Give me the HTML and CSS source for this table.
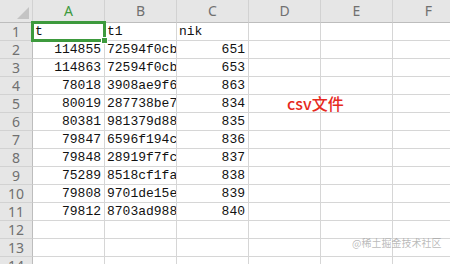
FILE: index.html
```html
<!DOCTYPE html>
<html lang="zh-CN">
    <head>
        <meta charset="UTF-8" />
        <meta name="viewport" content="width=device-width, initial-scale=1.0" />
        <title>csv文件</title>
        <link rel="stylesheet" href="styles.css">
    </head>
    <body>
        <div class="sheet">
            <!-- 列标题 -->
            <div class="corner"></div>
            <div class="col-head active">A</div>
            <div class="col-head">B</div>
            <div class="col-head">C</div>
            <div class="col-head">D</div>
            <div class="col-head">E</div>
            <div class="col-head">F</div>

            <div class="row-head">1</div>
            <div class="cell">t</div>
            <div class="cell">t1</div>
            <div class="cell">nik</div>
            <div class="cell"></div><div class="cell"></div><div class="cell"></div>

            <div class="row-head">2</div>
            <div class="cell num">114855</div>
            <div class="cell">72594f0cbd21a6</div>
            <div class="cell num">651</div>
            <div class="cell"></div><div class="cell"></div><div class="cell"></div>

            <div class="row-head">3</div>
            <div class="cell num">114863</div>
            <div class="cell">72594f0cbd21a6</div>
            <div class="cell num">653</div>
            <div class="cell"></div><div class="cell"></div><div class="cell"></div>

            <div class="row-head">4</div>
            <div class="cell num">78018</div>
            <div class="cell">3908ae9f6c01b</div>
            <div class="cell num">863</div>
            <div class="cell"></div><div class="cell"></div><div class="cell"></div>

            <div class="row-head">5</div>
            <div class="cell num">80019</div>
            <div class="cell">287738be7a5d2</div>
            <div class="cell num">834</div>
            <div class="cell"></div><div class="cell"></div><div class="cell"></div>

            <div class="row-head">6</div>
            <div class="cell num">80381</div>
            <div class="cell">981379d88e42f</div>
            <div class="cell num">835</div>
            <div class="cell"></div><div class="cell"></div><div class="cell"></div>

            <div class="row-head">7</div>
            <div class="cell num">79847</div>
            <div class="cell">6596f194c3b07</div>
            <div class="cell num">836</div>
            <div class="cell"></div><div class="cell"></div><div class="cell"></div>

            <div class="row-head">8</div>
            <div class="cell num">79848</div>
            <div class="cell">28919f7fc64a1</div>
            <div class="cell num">837</div>
            <div class="cell"></div><div class="cell"></div><div class="cell"></div>

            <div class="row-head">9</div>
            <div class="cell num">75289</div>
            <div class="cell">8518cf1fa20e9</div>
            <div class="cell num">838</div>
            <div class="cell"></div><div class="cell"></div><div class="cell"></div>

            <div class="row-head">10</div>
            <div class="cell num">79808</div>
            <div class="cell">9701de15e8c34</div>
            <div class="cell num">839</div>
            <div class="cell"></div><div class="cell"></div><div class="cell"></div>

            <div class="row-head">11</div>
            <div class="cell num">79812</div>
            <div class="cell">8703ad988f1b5</div>
            <div class="cell num">840</div>
            <div class="cell"></div><div class="cell"></div><div class="cell"></div>

            <div class="row-head">12</div>
            <div class="cell"></div><div class="cell"></div><div class="cell"></div>
            <div class="cell"></div><div class="cell"></div><div class="cell"></div>

            <div class="row-head">13</div>
            <div class="cell"></div><div class="cell"></div><div class="cell"></div>
            <div class="cell"></div><div class="cell"></div><div class="cell"></div>

            <div class="row-head">14</div>
            <div class="cell"></div><div class="cell"></div><div class="cell"></div>
            <div class="cell"></div><div class="cell"></div><div class="cell"></div>

            <!-- 选中单元格 A1 -->
            <div class="selection"><span class="handle"></span></div>
            <!-- 标注文字 -->
            <div class="note">csv文件</div>
        </div>
        <div class="watermark">@稀土掘金技术社区</div>
    </body>
</html>
```

FILE: styles.css
```css
* {
    margin: 0;
    padding: 0;
    box-sizing: border-box;
}
body {
    width: 450px;
    height: 264px;
    overflow: hidden;
    background-color: #fff;
    position: relative;
}
.sheet {
    position: relative;
    display: grid;
    grid-template-columns: 33px repeat(6, 72px);
    grid-template-rows: 23px;
    grid-auto-rows: 18px;
    width: 465px;
}

/* 表头 */
.corner,
.col-head,
.row-head {
    background-color: #e6e6e6;
    color: #707070;
    font-family: "Noto Sans", "Noto Sans CJK SC", sans-serif;
    border-right: 1px solid #d2d2d2;
    border-bottom: 1px solid #d2d2d2;
}
.corner {
    position: relative;
    border-bottom-color: #bdbdbd;
}
.corner::after {
    content: "";
    position: absolute;
    right: 3px;
    bottom: 3px;
    border-left: 12px solid transparent;
    border-bottom: 12px solid #c4c4c4;
}
.col-head {
    font-size: 14px;
    line-height: 22px;
    text-align: center;
    border-bottom-color: #bdbdbd;
}
.col-head.active {
    color: #3d9a3d;
}
.row-head {
    font-size: 14px;
    line-height: 17px;
    text-align: center;
    border-right-color: #bdbdbd;
}

/* 单元格 */
.cell {
    font-family: "Liberation Mono", "Noto Sans CJK SC", monospace;
    font-size: 13px;
    line-height: 17px;
    color: #111;
    padding: 0 2px;
    white-space: nowrap;
    overflow: hidden;
    border-right: 1px solid #d6d6d6;
    border-bottom: 1px solid #d6d6d6;
}
.cell.num {
    text-align: right;
    padding-right: 3px;
}

.selection {
    position: absolute;
    left: 31px;
    top: 21px;
    width: 75px;
    height: 21px;
    border: 3px solid #3d9a3d;
}
.handle {
    position: absolute;
    right: -5px;
    bottom: -5px;
    width: 7px;
    height: 7px;
    background-color: #3d9a3d;
    border: 1px solid #fff;
}

.note {
    position: absolute;
    left: 287px;
    top: 93px;
    font-family: "Noto Sans CJK SC", sans-serif;
    font-size: 16px;
    font-weight: 500;
    line-height: 20px;
    color: #e62a1e;
}

.watermark {
    position: absolute;
    left: 352px;
    top: 236px;
    font-family: "Noto Sans CJK SC", sans-serif;
    font-size: 10px;
    line-height: 14px;
    color: rgba(140, 140, 140, 0.6);
}
```
